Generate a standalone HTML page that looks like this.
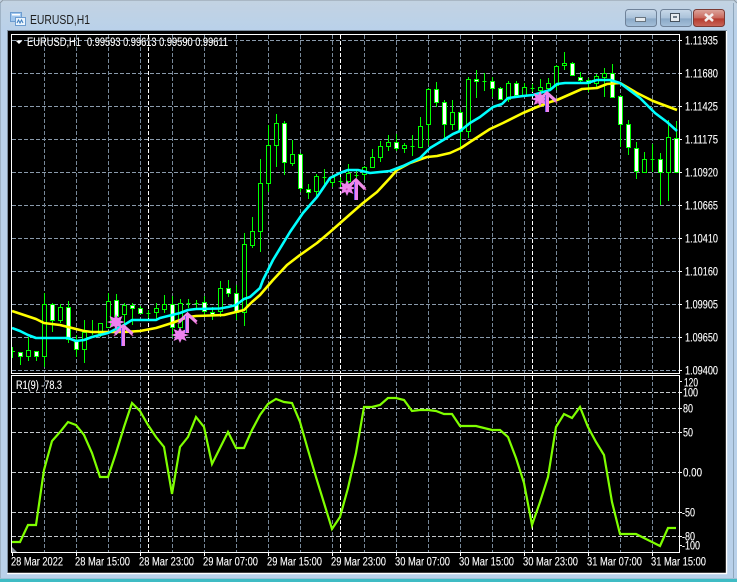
<!DOCTYPE html>
<html><head><meta charset="utf-8"><style>
html,body{margin:0;padding:0;background:#b9d1ea;width:737px;height:582px;overflow:hidden}
svg{display:block}
text{font-family:"Liberation Sans",sans-serif;fill:#fff;font-size:12px;stroke:#fff;stroke-width:.12px}
</style></head><body>
<svg width="737" height="582" viewBox="0 0 737 582" xmlns="http://www.w3.org/2000/svg">
<defs>
<linearGradient id="tb" x1="0" y1="0" x2="0" y2="1"><stop offset="0" stop-color="#c3d3e2"/><stop offset="1" stop-color="#b9d1ea"/></linearGradient>
<linearGradient id="bt" x1="0" y1="0" x2="0" y2="1"><stop offset="0" stop-color="#c9d9e9"/><stop offset=".5" stop-color="#aac2da"/><stop offset=".55" stop-color="#8ba9c7"/><stop offset="1" stop-color="#a5c0da"/></linearGradient>
<linearGradient id="cl" x1="0" y1="0" x2="0" y2="1"><stop offset="0" stop-color="#dda69e"/><stop offset=".5" stop-color="#c9685c"/><stop offset=".55" stop-color="#b53a2e"/><stop offset="1" stop-color="#c9675b"/></linearGradient>
<clipPath id="pc"><rect x="12" y="35" width="667" height="338"/></clipPath>
<clipPath id="ic"><rect x="12" y="376" width="667" height="176"/></clipPath>
</defs>
<rect width="737" height="582" fill="#b9d1ea"/>
<rect width="737" height="31" fill="url(#tb)"/>
<path d="M0 3L3 0H734L737 3" fill="none" stroke="#8f9ba6"/>
<path d="M.5 3V580" stroke="#9fb3c6"/>
<path d="M733.5 3V580" stroke="#8fa6bb"/>
<rect y="579" width="737" height="3" fill="#3fbcc4"/>
<rect x="0" y="578" width="737" height="1" fill="#9fc0d6"/>

<!-- title icon -->
<rect x="10.500" y="12.500" width="11" height="9" fill="#9fc6ee" stroke="#6d9ccf"/>
<rect x="12" y="14" width="8" height="1.500" fill="#fff"/>
<rect x="15.500" y="17.500" width="10" height="8" fill="#eaf4fd" stroke="#6d9ccf"/>
<path d="M17 23l1.500-3 1.500 3 1.500-3 1.500 3" fill="none" stroke="#3f7fc0"/>
<text x="30" y="24" style="font-size:13px;fill:#1e1e1e;stroke:none" textLength="60" lengthAdjust="spacingAndGlyphs">EURUSD,H1</text>

<!-- window buttons -->
<rect x="625.500" y="9.500" width="31" height="17" rx="3" fill="url(#bt)" stroke="#6f8299"/>
<rect x="635.500" y="17.500" width="10" height="4" fill="#e6ebef" stroke="#68747f"/>
<rect x="660.500" y="9.500" width="31" height="17" rx="3" fill="url(#bt)" stroke="#6f8299"/>
<rect x="670.500" y="13.500" width="9" height="8" fill="#e6ebef" stroke="#46525e"/>
<rect x="673" y="16" width="4" height="2" fill="#6d7a86"/>
<rect x="693.500" y="9.500" width="31" height="17" rx="3" fill="url(#cl)" stroke="#7c3a34"/>
<path d="M705 14l8 7M713 14l-8 7" stroke="#f4efee" stroke-width="2.600" fill="none"/>

<!-- chart background -->
<rect x="7" y="31" width="720" height="543" fill="#000"/>
<path d="M7 573.500H727M726.500 31V574" fill="none" stroke="#fff" stroke-width="1.400"/>
<path d="M7 30.500H727M7.500 31V573" fill="none" stroke="#7d8e9f"/>

<!-- panes -->
<g shape-rendering="crispEdges">
<rect x="11.500" y="34.500" width="668" height="339" fill="none" stroke="#fff"/>
<rect x="11.500" y="375.500" width="668" height="177" fill="none" stroke="#fff"/>
<!-- price grid -->
<path stroke="#8a9aab" stroke-dasharray="4 2" fill="none" d="M12 40.500H679M12 73.500H679M12 106.500H679M12 139.500H679M12 172.500H679M12 205.500H679M12 238.500H679M12 271.500H679M12 304.500H679M12 337.500H679M12 370.500H679"/>
<path stroke="#778899" stroke-dasharray="4 2" fill="none" d="M44.500 35V373M76.500 35V373M108.500 35V373M140.500 35V373M172.500 35V373M204.500 35V373M236.500 35V373M268.500 35V373M300.500 35V373M332.500 35V373M364.500 35V373M396.500 35V373M428.500 35V373M460.500 35V373M492.500 35V373M524.500 35V373M556.500 35V373M588.500 35V373M620.500 35V373M652.500 35V373"/>
<path stroke="#fff" stroke-dasharray="4 2" fill="none" d="M148.500 35V373M340.500 35V373M532.500 35V373"/>
<!-- indicator grid -->
<path stroke="#c4c8cc" stroke-dasharray="4 2" fill="none" d="M12 392.500H679M12 408.500H679M12 432.500H679M12 472.500H679M12 512.500H679M12 536.500H679"/>
<path stroke="#778899" stroke-dasharray="4 2" fill="none" d="M44.500 376V552M76.500 376V552M108.500 376V552M140.500 376V552M172.500 376V552M204.500 376V552M236.500 376V552M268.500 376V552M300.500 376V552M332.500 376V552M364.500 376V552M396.500 376V552M428.500 376V552M460.500 376V552M492.500 376V552M524.500 376V552M556.500 376V552M588.500 376V552M620.500 376V552M652.500 376V552"/>
<path stroke="#fff" stroke-dasharray="4 2" fill="none" d="M148.500 376V552M340.500 376V552M532.500 376V552"/>
<!-- ticks -->
<path stroke="#fff" d="M12.500 552V556M76.500 552V556M140.500 552V556M204.500 552V556M268.500 552V556M332.500 552V556M396.500 552V556M460.500 552V556M524.500 552V556M588.500 552V556M652.500 552V556"/>
<path stroke="#fff" d="M679 40.500h3M679 73.500h3M679 106.500h3M679 139.500h3M679 172.500h3M679 205.500h3M679 238.500h3M679 271.500h3M679 304.500h3M679 337.500h3M679 370.500h3M679 381.500h3M679 392.500h3M679 408.500h3M679 432.500h3M679 472.500h3M679 512.500h3M679 536.500h3M679 545.500h3"/>
</g>

<!-- candles -->
<g clip-path="url(#pc)" shape-rendering="crispEdges" stroke="#00ff00" stroke-width="1">
<path fill="none" d="M12.500 347V358M20.500 352V365M28.500 337V361M36.500 351V361M44.500 293V367M52.500 303V332M60.500 304V323M68.500 301V343M76.500 335V357M84.500 320V363M92.500 320V335M100.500 323V337M108.500 293V327M116.500 294V335M124.500 303V325M132.500 303V325M140.500 306V314M148.500 310V318M156.500 303V320M164.500 295V313M172.500 296V337M180.500 299V327M188.500 299V308M196.500 300V308M204.500 296V317M212.500 307V320M220.500 281V317M228.500 280V297M236.500 285V320M244.500 233V326M252.500 217V248M260.500 159V252M268.500 125V192M276.500 114V167M284.500 121V175M292.500 140V166M300.500 153V192M308.500 184V199M316.500 174V198M324.500 169V185M332.500 175V187M340.500 177V187M348.500 164V183M356.500 171V178M364.500 166V180M372.500 149V167M380.500 141V162M388.500 135V151M396.500 134V151M404.500 143V153M412.500 135V156M420.500 117V147M428.500 88V145M436.500 82V107M444.500 100V140M452.500 100V130M460.500 110V150M468.500 77V138M476.500 70V98M484.500 73V91M492.500 77V97M500.500 87V100M508.500 81V102M516.500 81V97M524.500 83V97M532.500 84V92M540.500 79V97M548.500 78V90M556.500 65V90M564.500 52V70M572.500 62V76M580.500 72V83M588.500 78V92M596.500 74V87M604.500 68V97M612.500 64V98M620.500 95V147M628.500 120V155M636.500 142V179M644.500 152V173M652.500 144V172M660.500 153V205M668.500 120V201M676.500 121V172"/>
<path fill="none" d="M12 351.500h3M146.500 313.500h4M186.500 303.500h4M194.500 303.500h4M322.500 177.500h4M338.500 181.500h4M354.500 175.500h4M410.500 146.500h4M482.500 81.500h4M530.500 88.500h4M650.500 159.500h4"/>
<path fill="#000" d="M26.500 350.500h4v6h-4zM42.500 304.500h4v52h-4zM58.500 307.500h4v13h-4zM82.500 332.500h4v17h-4zM98.500 323.500h4v10h-4zM106.500 301.500h4v26h-4zM122.500 305.500h4v9h-4zM154.500 308.500h4v4h-4zM162.500 304.500h4v5h-4zM178.500 303.500h4v24h-4zM218.500 288.500h4v23h-4zM242.500 244.500h4v68h-4zM250.500 231.500h4v14h-4zM258.500 183.500h4v48h-4zM266.500 145.500h4v38h-4zM274.500 123.500h4v22h-4zM290.500 154.500h4v9h-4zM314.500 176.500h4v15h-4zM330.500 177.500h4v5h-4zM346.500 173.500h4v8h-4zM362.500 167.500h4v7h-4zM370.500 157.500h4v10h-4zM378.500 146.500h4v11h-4zM386.500 142.500h4v4h-4zM402.500 145.500h4v3h-4zM418.500 126.500h4v21h-4zM426.500 89.500h4v35h-4zM450.500 112.500h4v12h-4zM466.500 79.500h4v52h-4zM506.500 83.500h4v16h-4zM522.500 87.500h4v8h-4zM538.500 87.500h4v3h-4zM546.500 83.500h4v5h-4zM554.500 66.500h4v19h-4zM562.500 63.500h4v2h-4zM594.500 76.500h4v7h-4zM602.500 73.500h4v4h-4zM642.500 159.500h4v13h-4zM666.500 137.500h4v35h-4z"/>
<path fill="#fff" d="M18.500 352.500h4v4h-4zM34.500 351.500h4v5h-4zM50.500 304.500h4v16h-4zM66.500 307.500h4v32h-4zM74.500 341.500h4v8h-4zM114.500 300.500h4v16h-4zM130.500 305.500h4v3h-4zM138.500 308.500h4v5h-4zM170.500 304.500h4v23h-4zM202.500 302.500h4v9h-4zM210.500 312.500h4v2h-4zM226.500 288.500h4v5h-4zM234.500 293.500h4v19h-4zM282.500 123.500h4v39h-4zM298.500 154.500h4v34h-4zM306.500 189.500h4v3h-4zM394.500 142.500h4v6h-4zM434.500 89.500h4v13h-4zM442.500 102.500h4v22h-4zM458.500 112.500h4v19h-4zM474.500 79.500h4v2h-4zM490.500 81.500h4v7h-4zM498.500 88.500h4v11h-4zM514.500 83.500h4v12h-4zM570.500 63.500h4v12h-4zM578.500 77.500h4v3h-4zM586.500 80.500h4v3h-4zM610.500 73.500h4v24h-4zM618.500 96.500h4v28h-4zM626.500 124.500h4v23h-4zM634.500 148.500h4v23h-4zM658.500 159.500h4v13h-4zM674.500 138.500h4v34h-4z"/>
</g>

<!-- moving averages -->
<g clip-path="url(#pc)" fill="none" stroke-width="2.600" stroke-linejoin="round">
<polyline stroke="#ffff00" points="12,311 36,319 44,323 60,325 84,331 92,332 124,332 140,331 156,328 172,323 188,317 196,316 210,315.500 224,315 236,312 244,310 252,302 260,295 273,280 287,265 300,255 317,243 330,232 347,217 363,203 377,192 390,178 397,170 410,163 427,157 437,156 450,153 461,148 470,142 490,129 503,123 523,113 537,107 550,102 557,100 582,89 597,88 607,84 620,83 637,93 653,101 677,110"/>
<polyline stroke="#00ffff" points="12,328 20,331 28,335 36,338 68,338 76,341 84,340 92,337 100,335 108,333 116,329 124,325 132,320 156,320 160,318 172,315 180,313 188,310 196,309 220,308.500 228,307 236,305 244,299 250,297 260,288 263,280 273,260 290,232 303,213 317,197 330,178 340,173 348,170 358,170 370,173 380,172 390,171 403,166 420,158 430,148 440,142 453,134 460,131 470,123 480,117 493,107 502,104 508,98 523,96 533,95 550,90 557,84 565,83 587,83 597,80 610,80 620,83 640,98 655,113 667,122 677,131"/>
</g>

<!-- signals -->
<g fill="#ee82ee" stroke="none">
<path d="M116 314l1.800 4 4.700-2-2 4.600 4.500 1.400-4.500 1.500 2 4.500-4.700-2-1.800 4-1.800-4-4.700 2 2-4.500-4.500-1.500 4.500-1.400-2-4.600 4.700 2z"/>
<path d="M180 327l1.800 4 4.700-2-2 4.600 4.500 1.400-4.500 1.500 2 4.500-4.700-2-1.800 4-1.800-4-4.700 2 2-4.500-4.500-1.500 4.500-1.400-2-4.600 4.700 2z"/>
<path d="M347 180l1.800 4 4.700-2-2 4.600 4.500 1.400-4.500 1.500 2 4.500-4.700-2-1.800 4-1.800-4-4.700 2 2-4.500-4.500-1.500 4.500-1.400-2-4.600 4.700 2z"/>
<path d="M540 91l1.800 4 4.700-2-2 4.600 4.500 1.400-4.500 1.500 2 4.500-4.700-2-1.800 4-1.800-4-4.700 2 2-4.500-4.500-1.500 4.500-1.400-2-4.600 4.700 2z"/>
</g>
<g fill="none">
<path stroke="#c44ba8" stroke-width="1.500" d="M114 336l9.500-10 9.500 10M178 324l9.500-10 9.500 10M346 190l10-10 10 10M537 103l10-10 10 10"/>
<path stroke="#f08ce8" stroke-width="3.200" d="M115 334l8.500-8 9 8M179 322l8.500-8 9 8M347 188l9-8 9 9M538 101l9-8 9 8"/>
<path stroke="#6a55e8" stroke-width="1" d="M121.500 328V346M185.500 316V333M354.500 182V200M545.500 95V112"/>
<path stroke="#ee82ee" stroke-width="3" d="M123.500 327V346M187.500 315V333M356.500 181V200M547.500 94V112"/>
</g>

<!-- RSI line -->
<polyline clip-path="url(#ic)" fill="none" stroke="#7fff00" stroke-width="2.200" stroke-linejoin="miter" points="12,542 20,542 28,525 36,525 44,470 52,441 60,432 68,422 76,425 84,435 92,453 100,477 108,477 116,453 124,427 132,403 140,411 148,425 156,437 164,447 172,494 180,447 188,437 196,417 204,427 212,464 220,448 228,432 236,448 244,448 252,430 260,415 268,404 276,399 284,402 292,403 300,422 308,450 316,477 324,503 332,529 340,517 348,488 356,453 364,407 372,407 380,405 388,398 396,398 404,400 412,411 420,410 428,410 436,411 444,414 452,414 460,426 468,426 476,426 484,428 492,430 500,430 508,437 516,458 524,483 532,525 540,502 548,477 556,427 564,414 572,418 580,407 588,427 596,442 604,455 612,502 620,534 628,534 636,534 644,538 652,542 660,546 668,528 676,528"/>

<path d="M12 547l5 5h-5z" fill="#8a929a"/>
<path d="M15.500 40.500h7l-3.500 3.500z" fill="#fff"/>

<!-- labels -->
<text x="27" y="46" style="font-size:11.500px" textLength="54" lengthAdjust="spacingAndGlyphs">EURUSD,H1</text>
<text x="87" y="46" style="font-size:11.500px" textLength="141" lengthAdjust="spacingAndGlyphs">0.99593 0.99613 0.99590 0.99611</text>
<text x="16" y="389" style="font-size:11.500px" textLength="46" lengthAdjust="spacingAndGlyphs">R1(9) -78.3</text>

<g>
<text x="685" y="44.500" textLength="33" lengthAdjust="spacingAndGlyphs">1.11935</text>
<text x="685" y="77.500" textLength="33" lengthAdjust="spacingAndGlyphs">1.11680</text>
<text x="685" y="110.500" textLength="33" lengthAdjust="spacingAndGlyphs">1.11425</text>
<text x="685" y="143.500" textLength="33" lengthAdjust="spacingAndGlyphs">1.11175</text>
<text x="685" y="176.500" textLength="33" lengthAdjust="spacingAndGlyphs">1.10920</text>
<text x="685" y="209.500" textLength="33" lengthAdjust="spacingAndGlyphs">1.10665</text>
<text x="685" y="242.500" textLength="33" lengthAdjust="spacingAndGlyphs">1.10410</text>
<text x="685" y="275.500" textLength="33" lengthAdjust="spacingAndGlyphs">1.10160</text>
<text x="685" y="308.500" textLength="33" lengthAdjust="spacingAndGlyphs">1.09905</text>
<text x="685" y="341.500" textLength="33" lengthAdjust="spacingAndGlyphs">1.09650</text>
<text x="685" y="374.500" textLength="33" lengthAdjust="spacingAndGlyphs">1.09400</text>

<text x="684" y="386.500" textLength="14" lengthAdjust="spacingAndGlyphs">120</text>
<text x="683" y="396.500" textLength="15" lengthAdjust="spacingAndGlyphs">100</text>
<text x="683" y="412.500" textLength="10" lengthAdjust="spacingAndGlyphs">80</text>
<text x="683" y="436.500" textLength="10" lengthAdjust="spacingAndGlyphs">50</text>
<text x="683" y="476.500" textLength="19" lengthAdjust="spacingAndGlyphs">0.00</text>
<text x="682" y="516.500" textLength="13" lengthAdjust="spacingAndGlyphs">-50</text>
<text x="682" y="540.500" textLength="13" lengthAdjust="spacingAndGlyphs">-80</text>
<text x="682" y="549.500" textLength="18" lengthAdjust="spacingAndGlyphs">-100</text>

<text x="11" y="565.500" textLength="52" lengthAdjust="spacingAndGlyphs">28 Mar 2022</text>
<text x="75" y="565.500" textLength="55" lengthAdjust="spacingAndGlyphs">28 Mar 15:00</text>
<text x="139" y="565.500" textLength="55" lengthAdjust="spacingAndGlyphs">28 Mar 23:00</text>
<text x="203" y="565.500" textLength="55" lengthAdjust="spacingAndGlyphs">29 Mar 07:00</text>
<text x="267" y="565.500" textLength="55" lengthAdjust="spacingAndGlyphs">29 Mar 15:00</text>
<text x="331" y="565.500" textLength="55" lengthAdjust="spacingAndGlyphs">29 Mar 23:00</text>
<text x="395" y="565.500" textLength="55" lengthAdjust="spacingAndGlyphs">30 Mar 07:00</text>
<text x="459" y="565.500" textLength="55" lengthAdjust="spacingAndGlyphs">30 Mar 15:00</text>
<text x="523" y="565.500" textLength="55" lengthAdjust="spacingAndGlyphs">30 Mar 23:00</text>
<text x="587" y="565.500" textLength="55" lengthAdjust="spacingAndGlyphs">31 Mar 07:00</text>
<text x="651" y="565.500" textLength="55" lengthAdjust="spacingAndGlyphs">31 Mar 15:00</text>
</g>
</svg>
</body></html>
